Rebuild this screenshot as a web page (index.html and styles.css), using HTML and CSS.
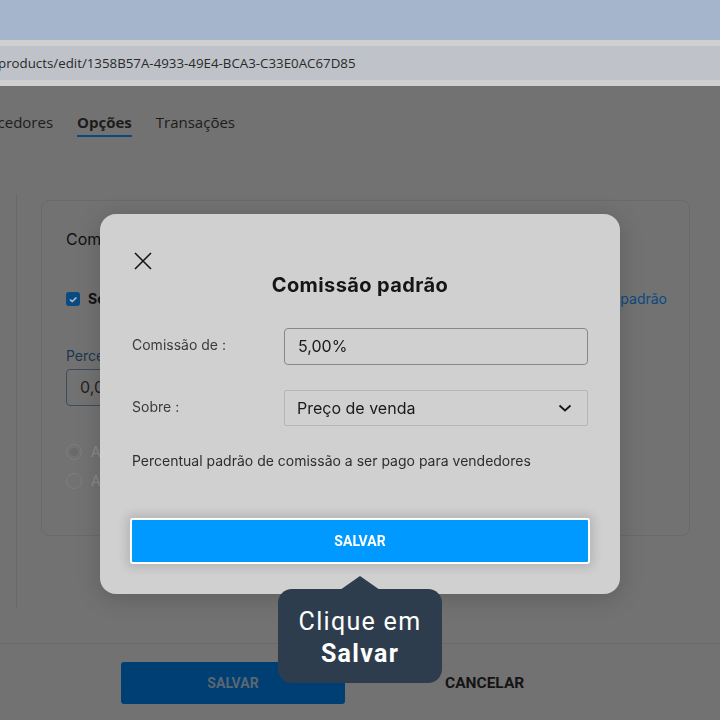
FILE: index.html
```html
<!DOCTYPE html>
<html lang="pt-BR">
<head>
    <meta charset="UTF-8">
    <meta name="viewport" content="width=device-width, initial-scale=1.0">
    <title>Editar produto</title>
    <link rel="stylesheet" href="styles.css">
</head>
<body>

    <div class="browser-bar"></div>
    <div class="address-strip">
        <div class="address">products/edit/1358B57A-4933-49E4-BCA3-C33E0AC67D85</div>
    </div>

    <div class="page">
        <nav class="tabs">
            <span class="tab">Fornecedores</span>
            <span class="tab active">Opções</span>
            <span class="tab">Transações</span>
        </nav>

        <div class="panel">
            <div class="card">
                <h3>Comissões</h3>
                <div class="check-row">
                    <label class="check"><span class="box">&#10003;</span> Seguir comissão padrão</label>
                    <a class="link">Alterar comissão padrão</a>
                </div>
                <div class="field">
                    <label>Percentual de comissão</label>
                    <div class="fake-input">0,00%</div>
                </div>
                <div class="radios">
                    <div class="radio checked"><span class="dot"></span> Aplicar ao preço de venda</div>
                    <div class="radio"><span class="dot"></span> Aplicar ao lucro</div>
                </div>
            </div>
        </div>

        <footer class="actions">
            <button class="btn-primary">SALVAR</button>
            <button class="btn-link">CANCELAR</button>
        </footer>
    </div>

    <div class="modal-layer">
        <div class="modal">
            <button class="close" aria-label="Fechar">
                <svg width="20" height="20" viewBox="0 0 20 20"><path d="M2 2 L18 18 M18 2 L2 18" stroke="#151515" stroke-width="1.6" fill="none"/></svg>
            </button>
            <h2>Comissão padrão</h2>

            <div class="form-row">
                <label>Comissão de<span class="colon">:</span></label>
                <div class="input">5,00%</div>
            </div>
            <div class="form-row">
                <label>Sobre<span class="colon">:</span></label>
                <div class="select">
                    Preço de venda
                    <svg width="14" height="10" viewBox="0 0 14 10"><path d="M1.5 2.5 L7 7.5 L12.5 2.5" stroke="#151515" stroke-width="1.8" fill="none"/></svg>
                </div>
            </div>

            <p class="hint">Percentual padrão de comissão a ser pago para vendedores</p>

            <button class="save">SALVAR</button>

            <div class="tip">
                Clique em<br><strong>Salvar</strong>
            </div>
        </div>
    </div>

</body>
</html>
```

FILE: styles.css
```css
* {
    box-sizing: border-box;
    margin: 0;
    padding: 0;
}

body {
    background: #727272;
    font-family: Inter, 'Noto Sans', sans-serif;
    width: 720px;
    height: 720px;
    overflow: hidden;
}

/* browser chrome */
.browser-bar {
    height: 40px;
    background: #a5b6cc;
}

.address-strip {
    height: 46px;
    background: #cfcfcf;
    padding: 6px 0;
}

.address {
    height: 34px;
    background: #bfc2c8;
    font-family: 'Open Sans', sans-serif;
    font-size: 13.3px;
    line-height: 34px;
    color: #2a2a2a;
    margin-left: -2px;
    white-space: nowrap;
}

/* page behind the dialog */
.page {
    height: 634px;
    display: flex;
    flex-direction: column;
}

.tabs {
    display: flex;
    gap: 24px;
    margin-left: -43px;
    padding-top: 25px;
    font-family: 'Open Sans', sans-serif;
    font-size: 15px;
    color: #1c1c1c;
}

.tab {
    line-height: 22px;
    padding-bottom: 2px;
    border-bottom: 2px solid transparent;
}

.tab.active {
    font-weight: 700;
    border-bottom-color: #0b4a80;
}

.panel {
    margin: 57px 0 0 16px;
    padding: 6px 30px 0 24px;
    border-left: 1px solid #686868;
    height: 415px;
}

.card {
    border: 1px solid #6a6a6a;
    border-radius: 8px;
    height: 336px;
    padding: 27px 22px 0 24px;
}

.card h3 {
    font-size: 16px;
    font-weight: 400;
    color: #111;
    line-height: 22px;
}

.check-row {
    display: flex;
    justify-content: space-between;
    align-items: center;
    margin-top: 40px;
    font-size: 14px;
}

.check {
    display: flex;
    align-items: center;
    gap: 8px;
    font-weight: 700;
    color: #111;
}

.box {
    width: 14px;
    height: 14px;
    border-radius: 3px;
    background: #0b4a80;
    color: #b8c4cf;
    font-size: 10px;
    line-height: 14px;
    text-align: center;
}

.link {
    color: #0a4a80;
}

.field {
    margin-top: 40px;
}

.field label {
    display: block;
    font-size: 14px;
    color: #1e3650;
    margin-bottom: 5px;
}

.fake-input {
    width: 260px;
    height: 37px;
    border: 1px solid #3d4c5b;
    border-radius: 4px;
    padding-left: 13px;
    line-height: 35px;
    font-size: 16px;
    color: #222;
}

.radios {
    margin-top: 37px;
    display: flex;
    flex-direction: column;
    gap: 12px;
    font-size: 14px;
    color: #8a8a8a;
}

.radio {
    display: flex;
    align-items: center;
    gap: 9px;
}

.dot {
    width: 16px;
    height: 16px;
    border-radius: 50%;
    border: 1px solid #7e7e7e;
    position: relative;
}

.radio.checked .dot::after {
    content: '';
    position: absolute;
    inset: 3px;
    border-radius: 50%;
    background: #6a6a6a;
}

.actions {
    margin-top: auto;
    height: 77px;
    border-top: 1px solid #6b6b6b;
    padding: 18px 0 0 121px;
    display: flex;
    align-items: flex-start;
}

.actions button {
    border: none;
    font-family: Roboto, sans-serif;
    font-weight: 700;
    font-size: 14px;
}

.btn-primary {
    width: 224px;
    height: 42px;
    background: #003f73;
    color: #5b6671;
    border-radius: 3px;
}

.actions .btn-link {
    background: none;
    color: #141414;
    margin-left: 100px;
    height: 42px;
    font-size: 15.5px;
}

/* dialog */
.modal-layer {
    position: fixed;
    inset: 0;
}

.modal {
    position: absolute;
    left: 100px;
    top: 214px;
    width: 520px;
    height: 380px;
    background: #d0d0d0;
    border-radius: 16px;
    box-shadow: 0 4px 24px rgba(0, 0, 0, 0.18);
    padding: 32px 32px 0 32px;
}

.close {
    background: none;
    border: none;
    display: block;
    width: 20px;
    height: 20px;
    margin-left: 1px;
    margin-top: 5px;
}

.close svg {
    display: block;
}

.modal h2 {
    text-align: center;
    font-size: 20px;
    font-weight: 700;
    letter-spacing: 0.4px;
    color: #151515;
    line-height: 26px;
    margin-top: 1px;
}

.form-row {
    display: flex;
    align-items: center;
    margin-top: 30px;
}

.form-row + .form-row {
    margin-top: 25px;
}

.form-row label {
    width: 152px;
    font-size: 14px;
    color: #3b3b3b;
    margin-top: -4px;
}

.colon {
    margin-left: 4px;
}

.input {
    width: 304px;
    height: 37px;
    border: 1px solid #888;
    border-radius: 4px;
    padding-left: 13px;
    line-height: 35px;
    font-size: 16px;
    color: #1a1a1a;
}

.select {
    width: 304px;
    height: 36px;
    border: 1px solid #b6b6b6;
    border-radius: 2px;
    padding: 0 15px 0 12px;
    font-size: 16px;
    color: #1a1a1a;
    display: flex;
    align-items: center;
    justify-content: space-between;
}

.hint {
    margin-top: 26px;
    font-size: 14px;
    color: #2e2e2e;
}

.save {
    position: relative;
    display: block;
    margin-top: 49px;
    margin-left: -2px;
    width: 460px;
    height: 46px;
    background: #0099ff;
    border: 2px solid #fff;
    border-radius: 3px;
    color: #fff;
    font-family: Roboto, sans-serif;
    font-weight: 700;
    font-size: 14px;
    box-shadow: 0 0 10px 4px rgba(0, 0, 0, 0.12);
}

/* tutorial tooltip pointing at the save button */
.tip {
    position: absolute;
    left: 178px;
    top: 375px;
    width: 164px;
    height: 94px;
    background: #2e3d4d;
    border-radius: 14px;
    color: #fff;
    font-family: Roboto, sans-serif;
    font-size: 25px;
    line-height: 32px;
    letter-spacing: 1.3px;
    text-align: center;
    padding-top: 17px;
}

.tip::before {
    content: '';
    position: absolute;
    left: 62px;
    top: -13px;
    border-left: 20px solid transparent;
    border-right: 20px solid transparent;
    border-bottom: 14px solid #2e3d4d;
}
```
